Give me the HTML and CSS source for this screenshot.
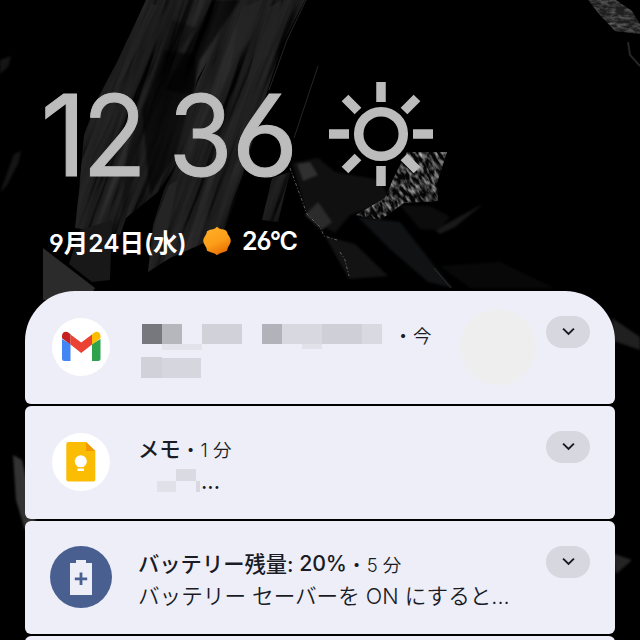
FILE: index.html
```html
<!DOCTYPE html>
<html lang="ja">
<head>
<meta charset="utf-8">
<title>ロック画面</title>
<link rel="stylesheet" href="styles.css">
</head>
<body>
<svg class="wallpaper" viewBox="0 0 640 640" aria-hidden="true">
  <defs>
    <filter id="streaks" x="0" y="0" width="100%" height="100%" color-interpolation-filters="sRGB">
      <feTurbulence type="fractalNoise" baseFrequency="0.1 0.006" numOctaves="4" seed="8"/>
      <feColorMatrix values="1.6 0 0 0 -0.4  1.6 0 0 0 -0.4  1.6 0 0 0 -0.4  0 0 0 0 1"/>
      <feComponentTransfer>
        <feFuncR type="table" tableValues="0.01 0.1 0.13 0.16 0.18"/><feFuncG type="table" tableValues="0.01 0.1 0.13 0.16 0.18"/><feFuncB type="table" tableValues="0.01 0.1 0.13 0.16 0.18"/>
      </feComponentTransfer>
    </filter>
    <filter id="grain" x="0" y="0" width="100%" height="100%" color-interpolation-filters="sRGB">
      <feTurbulence type="fractalNoise" baseFrequency="0.12 0.3" numOctaves="3" seed="4"/>
      <feColorMatrix values="1.7 0 0 0 -0.66  1.7 0 0 0 -0.66  1.7 0 0 0 -0.66  0 0 0 0 1"/>
    </filter>
    <filter id="soft" color-interpolation-filters="sRGB"><feGaussianBlur stdDeviation="1.2"/></filter>
    <clipPath id="cliffs">
      <path d="M146 0H250L228 25 198 78 194 90 222 30 237 0H305L282 45 267 92 250 150 234 205 222 235 170 258 148 272 153 225 164 190 176 165 158 192 126 218 120 235 75 228 79 190 84 135 98 98 118 60Z"/>
      <path d="M272 178L290 172 278 222 262 220Z"/>
    </clipPath>
    <clipPath id="shard"><path d="M407 152H447L437 183 438 201 404 203 380 220 356 215 385 198 394 177Z"/></clipPath>
    <clipPath id="corner"><path d="M588 0H616L632 11 640 24V34L615 31 600 15Z"/></clipPath>
  </defs>
  <rect width="640" height="640" fill="#000"/>
  <g clip-path="url(#cliffs)">
    <g transform="rotate(20 200 140)"><rect x="0" y="-80" width="400" height="480" filter="url(#streaks)"/></g>
    <g filter="url(#soft)">
      <path d="M172 20L196 28 150 92 138 165 121 215 128 145Z" fill="#000" opacity=".35"/>
      <path d="M165 50L195 55 196 86 175 155 150 195 142 110Z" fill="#000" opacity=".6"/>
      <path d="M213 0L240 0 200 60 192 95 165 90Z" fill="#000" opacity=".6"/>
    </g>
  </g>
  <g fill="#242424">
    <path d="M151 3L157 6 125 75 112 92Z" opacity=".8"/>
    <path d="M241 8L262 0 250 38 231 65Z" opacity=".8"/>
    <path d="M268 8L282 0 268 55 246 85 255 50Z" opacity=".8"/>
    <path d="M169 185L178 180 168 228 151 260 156 220Z"/>
    <path d="M105 105L118 105 93 155 84 195 77 222 82 160Z" opacity=".8"/>
    <path d="M43 248L95 288 88 300H43Z" fill="#2b2b2b"/>
    <path d="M80 230L112 220 110 280 92 282 69 264Z" fill="#181818"/>
  </g>
  <path d="M306 0L287 40 269 90M318 66L294 138" fill="none" stroke="#242424"/>
  <g filter="url(#soft)">
    <path d="M292 163L318 158 335 172 380 180 390 200 350 215 335 233 308 218Z" fill="#101010"/>
    <path d="M297 164L310 162 318 175 303 181Z" fill="#303030"/>
    <path d="M305 215L318 202 332 222 322 230Z" fill="#2b2b2b"/>
    <path d="M325 236L355 244 388 276 349 279Z" fill="#131313"/>
    <path d="M358 217L400 222 436 268 453 288 428 282 391 250Z" fill="#101214"/>
    <path d="M435 230L483 204 455 227 440 234Z" fill="#191919"/>
    <path d="M440 266L500 262 554 288H470Z" fill="#080808"/>
    <path d="M0 60L11 56 8 67 0 74ZM14 154L21 151 18 164 7 185 0 193Z" fill="#151515"/>
    <path d="M400 205L430 206 450 217 438 230 420 229Z" fill="#0c0c0c"/>
    <path d="M612 318L640 337V350L614 341Z" fill="#202020"/>
    <path d="M612 553L632 560 616 574Z" fill="#242424"/>
    <path d="M13 455L22 460 36 521 25 530 16 500Z" fill="#333"/>
  </g>
  <path d="M290 168L307 214 320 227 324 236 337 240M340 252L345 260 349 276" fill="none" stroke="#757575" stroke-dasharray="3 2 1 2" stroke-width=".8"/>
  <path d="M628 42L630 55 640 66" fill="none" stroke="#252525" stroke-width="2"/>
  <path d="M434 268L451 288" fill="none" stroke="#303030"/>
  <g clip-path="url(#shard)">
    <rect x="340" y="140" width="120" height="90" fill="#282828"/>
    <g transform="rotate(60 410 180)"><rect x="330" y="100" width="160" height="160" filter="url(#grain)" opacity=".85"/></g>
  </g>
  <g clip-path="url(#corner)"><rect x="580" y="0" width="60" height="40" fill="#303030"/><rect x="580" y="0" width="60" height="40" filter="url(#grain)" opacity=".35"/></g>
</svg>

<main class="screen">
  <header class="glance">
    <svg class="clock" viewBox="0 0 410 120" width="410" height="120" role="img" aria-label="12:36">
      <g class="digits">
        <text transform="translate(.5 105.5)">1</text>
        <text transform="translate(42.5 105.5) scale(.93 1)">2</text>
        <text transform="translate(128.500 105.500) scale(.92 1)">3</text>
        <text transform="translate(191.500 105.500) scale(1.02 1)">6</text>
      </g>
      <g class="sun" transform="translate(341 64)">
        <circle r="22.3"/>
        <path d="M0-52V-32M0 32V52M-52 0H-32M32 0H52M-36-36L-23-23M23 23L36 36M36-36L23-23M-23 23L-36 36"/>
      </g>
    </svg>
    <div class="date-row">
      <span class="date">9月24日(水)</span>
      <svg class="weather" viewBox="0 0 30 30" width="30" height="30">
        <defs><linearGradient id="orange" x1=".25" y1="0" x2=".7" y2="1"><stop offset="0" stop-color="#ffae25"/><stop offset=".55" stop-color="#fc9d18"/><stop offset="1" stop-color="#e66a00"/></linearGradient></defs>
        <path d="M15 .8Q17 3.4 20 3.2 23.500 3 25 5.800 25.400 8.500 27.400 10.800 30 14.800 27.400 18.800 25.700 21.500 25 24.800 22 26.200 19 27 17 27.600 15 29.200 13 27.600 11 27 8 26.400 5 24.800 4.600 21.500 2.600 18.800 0 14.800 2.600 10.800 4.600 8.500 5 5.200 8 3.400 11 3.200 13 3 15 .8Z" fill="url(#orange)"/>
      </svg>
      <span class="temp">26°C</span>
    </div>
  </header>

  <section class="notifications">
    <article class="card first">
      <svg class="icon" viewBox="0 0 62 62">
        <circle cx="31" cy="31" r="29" fill="#fff"/>
        <path d="M12 23V42.500Q12 45 14.500 45H20.500V28Z" fill="#4285f4"/>
        <path d="M50.500 23V42.500Q50.500 45 48 45H42V28Z" fill="#2fa24c"/>
        <path d="M20.500 18.500L31.200 26.500 42 18.500V28.500L31.200 37 20.500 28.500Z" fill="#ea4335"/>
        <path d="M12 23V20C12 16 16 14.500 19 17L20.500 18.300V28.500L12 22.300Z" fill="#c5221f"/>
        <path d="M42 18.300L44 16.800C47 14.500 50.500 16.500 50.500 20V22.300L42 28.500Z" fill="#fbbc04"/>
      </svg>
      <div class="body redacted">
        <svg class="mosaic" viewBox="0 0 242 56" width="242" height="56" aria-hidden="true">
          <path d="M2 1H22V21H2Z" fill="#77787e"/><path d="M22 1H42V21H22Z" fill="#b6b7bd"/>
          <path d="M22 21H62V27H22Z" fill="#e3e3eb"/><path d="M62 1H102V21H62Z" fill="#d1d1d9"/>
          <path d="M122 1H142V21H122Z" fill="#b2b3ba"/><path d="M142 1H182V21H142Z" fill="#d8d8e0"/>
          <path d="M162 21H182V26H162Z" fill="#e1e1e9"/><path d="M182 1H222V21H182Z" fill="#cecfd7"/>
          <path d="M222 1H242V21H222Z" fill="#d9d9e1"/><path d="M1 34H22V55H1Z" fill="#d1d1d9"/><path d="M22 35H61V55H22Z" fill="#d6d6de"/>
        </svg>
        <span class="time now"><b>•</b>今</span>
      </div>
      <span class="avatar"></span>
      <button class="expand" aria-label="展開"><svg viewBox="0 0 12 8"><path d="M1 1.300L6 6.300 11 1.300"/></svg></button>
    </article>

    <article class="card">
      <svg class="icon" viewBox="0 0 62 62">
        <circle cx="31" cy="31" r="29" fill="#fff"/>
        <path d="M18.300 11H36L45.300 20V48.500Q45.300 50.500 43.300 50.500H18.300Q16.300 50.500 16.300 48.500V13Q16.300 11 18.300 11Z" fill="#fbbc04"/>
        <path d="M36 11L45.300 20H36Z" fill="#f29900"/>
        <circle cx="30.800" cy="30.300" r="6" fill="#fff"/><path d="M27.500 33H34V36H27.500ZM27.500 37.500H34V40H27.500Z" fill="#fff"/>
      </svg>
      <div class="body">
        <p class="title">メモ<span class="time"><b>•</b>1 分</span></p>
        <p class="memo-text"><svg viewBox="0 0 45 25" width="45" height="25" aria-hidden="true"><path d="M1 13H20V24H1Z" fill="#e1e1e9"/><path d="M20 1H40V13H20Z" fill="#dadae2"/><path d="M40 13H44V24H40Z" fill="#d8d8e0"/></svg><span>...</span></p>
      </div>
      <button class="expand" aria-label="展開"><svg viewBox="0 0 12 8"><path d="M1 1.300L6 6.300 11 1.300"/></svg></button>
    </article>

    <article class="card">
      <svg class="icon" viewBox="0 0 62 62">
        <circle cx="31" cy="31" r="31" fill="#485f90"/>
        <path d="M26 14H36V17H42V49H20V17H26Z" fill="#eeeef8"/>
        <path d="M31 26.500V39M24.800 32.800H37.200" stroke="#485f90" stroke-width="2.800"/>
      </svg>
      <div class="body">
        <p class="title">バッテリー残量: <span class="percent">20%</span><span class="time"><b>•</b>5 分</span></p>
        <p class="detail">バッテリー セーバーを ON にすると...</p>
      </div>
      <button class="expand" aria-label="展開"><svg viewBox="0 0 12 8"><path d="M1 1.300L6 6.300 11 1.300"/></svg></button>
    </article>
    <article class="card"></article>
  </section>
</main>
</body>
</html>
```
FILE: styles.css
```css
* { box-sizing: border-box; }
html, body { width: 640px; height: 640px; margin: 0; overflow: hidden; background: #000; }
body { position: relative; font-family: Inter, "Noto Sans CJK JP", sans-serif; }
p { margin: 0; }
.wallpaper { position: absolute; inset: 0; width: 640px; height: 640px; }
.screen { position: relative; height: 640px; overflow: hidden; }
.glance { height: 291px; padding: 70px 0 0 40px; }
.clock { display: block; overflow: visible; }
.digits { fill: #bcbcbc; stroke: #bcbcbc; stroke-width: 1px; font: 400 113px Inter, sans-serif; font-feature-settings: "cv03" 1, "cv04" 1; }
.sun { fill: none; stroke: #bcbcbc; stroke-width: 9.5px; }
.date-row { display: flex; align-items: center; height: 36px; margin-top: 33px; color: #fff; white-space: nowrap; }
.date, .temp { font-family: Inter, "Noto Sans CJK JP", sans-serif; font-weight: 600; font-feature-settings: "cv03" 1, "cv04" 1; }
.date { width: 139px; margin-left: 9px; font-size: 24.5px; letter-spacing: 0; }
.weather { margin-left: 14px; flex: none; }
.temp { margin-left: 10px; font-size: 25px; letter-spacing: -1.1px; line-height: 30px; }
.notifications { display: flex; flex-direction: column; gap: 2.5px; margin: 0 25px; }
.card { position: relative; display: flex; flex: none; height: 112.5px; padding: 25px 25px 0; border-radius: 6px; background: #eeeef8; color: #191b25; }
.card.first { border-radius: 50px 50px 6px 6px; }
.icon { width: 62px; height: 62px; flex: none; }
.body { flex: 1; margin-left: 26px; white-space: nowrap; }
.title { display: flex; align-items: center; height: 33px; font-size: 21.3px; font-weight: 500; white-space: pre; }
.percent { letter-spacing: -.2px; }
.time { display: inline-flex; align-items: center; font-size: 18.5px; font-weight: 350; }
.title .time { padding-top: 2px; }
.time b { width: 20px; font-size: 13px; text-align: center; }
.detail { height: 34px; line-height: 34px; font-size: 21.6px; font-weight: 350; }
.redacted { display: flex; padding-top: 7px; margin-left: 27px; }
.mosaic { flex: none; margin-left: 1px; }
.now { height: 24px; margin-left: 11px; }
.memo-text { display: flex; align-items: center; padding-left: 18px; height: 33px; font-size: 22px; }
.avatar { position: absolute; left: 435px; top: 18px; width: 76px; height: 76px; border-radius: 50%; background: #eeeeee; filter: blur(1px); }
.expand { display: grid; place-items: center; flex: none; width: 44px; height: 32px; padding: 0; border: 0; border-radius: 16px; background: #d7d7e0; }
.expand svg { width: 13px; height: 9px; margin-bottom: 2px; fill: none; stroke: #191b25; stroke-width: 1.8px; }
```
